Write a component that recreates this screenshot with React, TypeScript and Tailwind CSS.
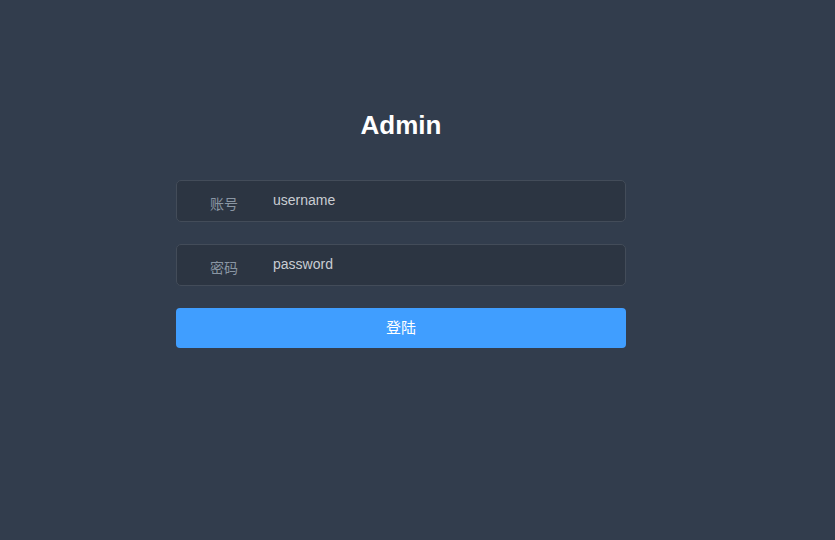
import { useState } from "react";

const Field = ({ label, placeholder, type }: { label: string; placeholder: string; type: string }) => {
  const [val, setVal] = useState(placeholder);
  return (
    <div className="flex items-center h-[42px] rounded-[5px] border border-[#434c59] bg-[#2c3542]">
      <span className="w-[96px] pl-[33px] pt-[6px] text-[14px] text-[#8a96a3]">{label}</span>
      <input
        className="flex-1 bg-transparent outline-none text-[14px] text-[#c9cdd3] pb-[1px]"
        type={type === "password" ? "text" : type}
        value={val}
        onChange={(e) => setVal(e.target.value)}
      />
    </div>
  );
};

const App = () => {
  return (
    <div
      className="w-full h-[540px] bg-[#323d4d] flex flex-col items-center pr-[33px]"
      style={{ fontFamily: '"Liberation Sans", "Noto Sans CJK SC", sans-serif' }}
    >
      <div className="w-[450px] mt-[108px] flex flex-col">
        <h1 className="text-center text-[26px] font-bold text-white leading-[34px]">Admin</h1>
        <div className="mt-[38px] flex flex-col gap-[22px]">
          <Field label="账号" placeholder="username" type="text" />
          <Field label="密码" placeholder="password" type="password" />
          <button className="h-[40px] rounded-[4px] bg-[#409eff] text-white text-[15px]">登陆</button>
        </div>
      </div>
    </div>
  );
};

export default App;
